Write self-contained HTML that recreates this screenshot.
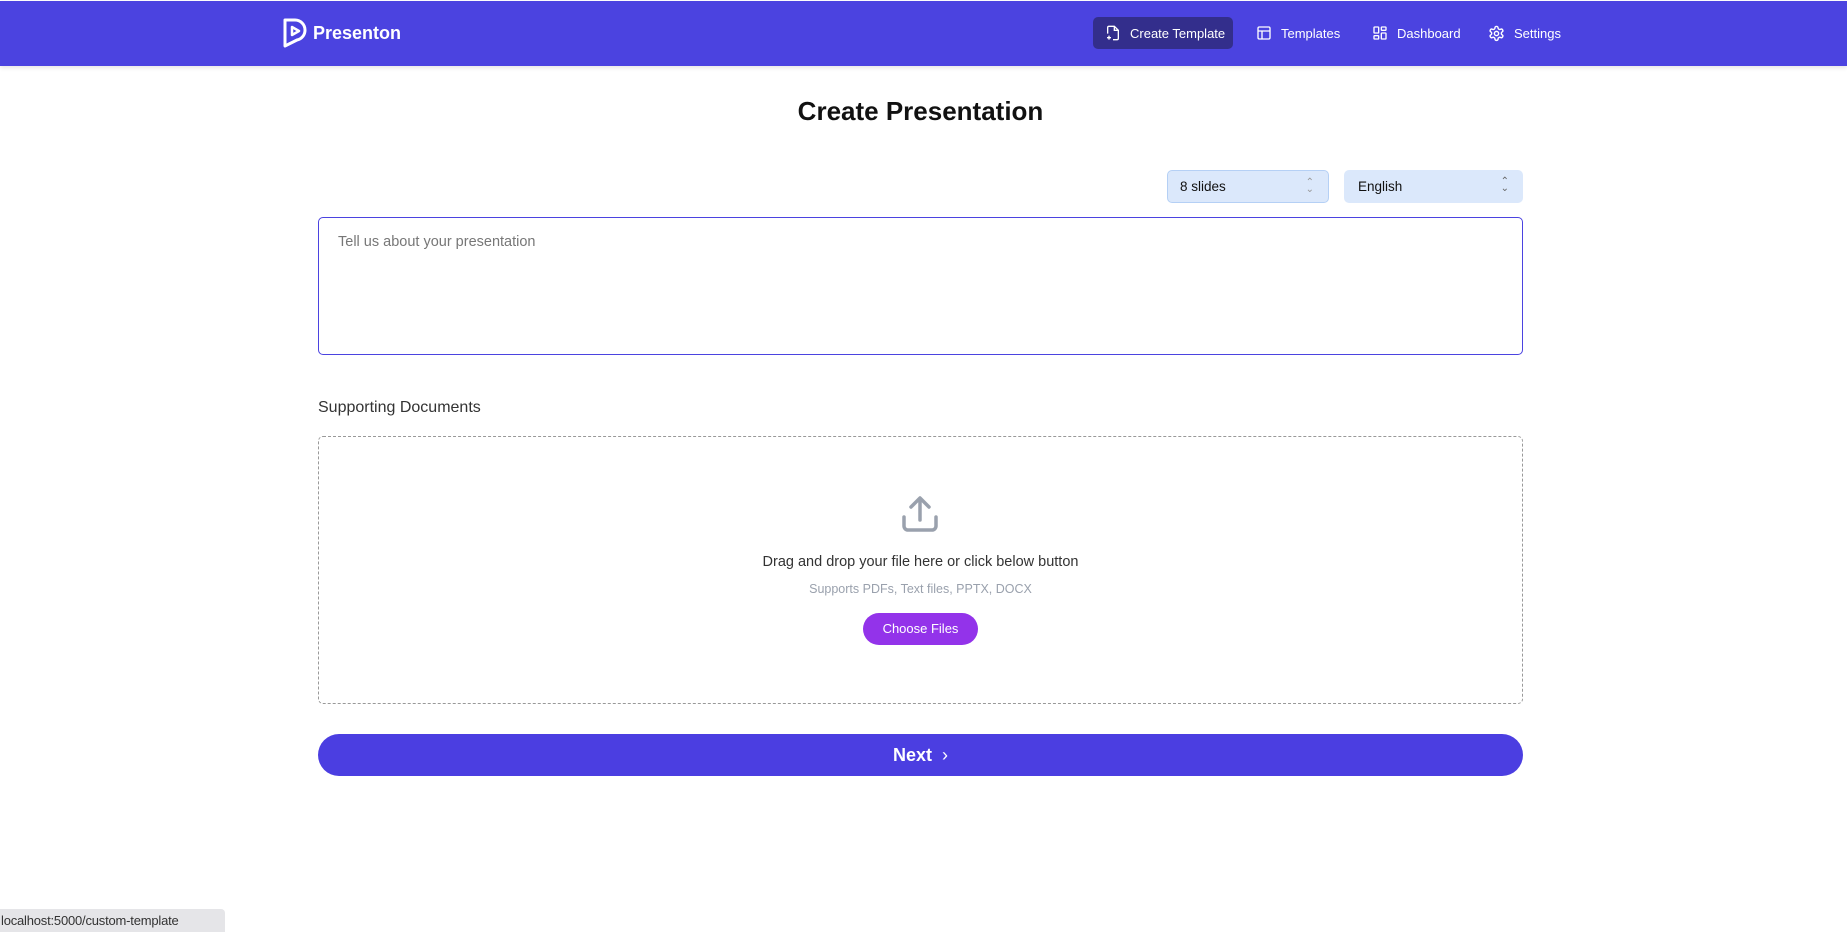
<!DOCTYPE html>
<html><head><meta charset="utf-8"><style>
*{box-sizing:border-box;margin:0;padding:0}
body{width:1847px;height:932px;background:#fff;font-family:"Liberation Sans",sans-serif;position:relative;overflow:hidden}
.hdr{position:absolute;left:0;top:1px;width:1847px;height:65px;background:#4b43e0;box-shadow:0 2px 4px rgba(0,0,0,.1)}
.abs{position:absolute}
.nav{position:absolute;top:17px;height:32px;display:flex;align-items:center;color:#fff;font-size:13px}
.nav svg{margin-right:9px}
.sel{position:absolute;top:170px;height:33px;background:#dbe8fb;border-radius:5px;font-size:13.5px;color:#111;display:flex;align-items:center;padding-left:12px}
</style></head><body>
<div class="hdr"></div>
<svg class="abs" style="left:283px;top:18px" width="26" height="30" viewBox="0 0 26 30"><path d="M2 2 H12 A10 10 0 0 1 22 12 A10 10 0 0 1 14 22 L2 28 Z" fill="none" stroke="#fff" stroke-width="3" stroke-linejoin="round"/><path d="M9 9 L16 13 L9 17 Z" fill="none" stroke="#fff" stroke-width="2.5" stroke-linejoin="round"/></svg>
<div class="abs" style="left:313px;top:23px;color:#fff;font-weight:bold;font-size:18px">Presenton</div>
<div class="abs" style="left:1093px;top:17px;width:140px;height:32px;background:#332e8c;border-radius:5px"></div>
<div class="nav" style="left:1105px"><svg width="16" height="16" viewBox="0 0 24 24" fill="none" stroke="#fff" stroke-width="2"><path d="M4 13V4a2 2 0 0 1 2-2h8l6 6v12a2 2 0 0 1-2 2h-6"/><path d="M14 2v6h6M3 19h6M6 16v6"/></svg>Create Template</div>
<div class="nav" style="left:1256px"><svg width="16" height="16" viewBox="0 0 24 24" fill="none" stroke="#fff" stroke-width="2"><rect x="3" y="3" width="18" height="18" rx="2"/><path d="M3 9h18M9 21V9"/></svg>Templates</div>
<div class="nav" style="left:1372px"><svg width="16" height="16" viewBox="0 0 24 24" fill="none" stroke="#fff" stroke-width="2"><rect x="3" y="3" width="7" height="9" rx="1"/><rect x="14" y="3" width="7" height="5" rx="1"/><rect x="14" y="12" width="7" height="9" rx="1"/><rect x="3" y="16" width="7" height="5" rx="1"/></svg>Dashboard</div>
<div class="nav" style="left:1488px"><svg width="17" height="17" viewBox="0 0 24 24" fill="none" stroke="#fff" stroke-width="2"><circle cx="12" cy="12" r="3"/><path d="M12.2 2h-.4a2 2 0 0 0-2 2v.2a2 2 0 0 1-1 1.7l-.4.2a2 2 0 0 1-2 0l-.2-.1a2 2 0 0 0-2.7.7l-.2.4a2 2 0 0 0 .7 2.7l.2.1a2 2 0 0 1 1 1.7v.5a2 2 0 0 1-1 1.700l-.2.1a2 2 0 0 0-.7 2.7l.2.4a2 2 0 0 0 2.7.7l.2-.1a2 2 0 0 1 2 0l.4.2a2 2 0 0 1 1 1.7v.2a2 2 0 0 0 2 2h.4a2 2 0 0 0 2-2v-.2a2 2 0 0 1 1-1.7l.4-.2a2 2 0 0 1 2 0l.2.1a2 2 0 0 0 2.7-.7l.2-.4a2 2 0 0 0-.7-2.7l-.2-.1a2 2 0 0 1-1-1.7v-.5a2 2 0 0 1 1-1.7l.2-.1a2 2 0 0 0 .7-2.7l-.2-.4a2 2 0 0 0-2.7-.7l-.2.1a2 2 0 0 1-2 0l-.4-.2a2 2 0 0 1-1-1.7V4a2 2 0 0 0-2-2z"/></svg>Settings</div>
<div class="abs" style="left:0;width:1841px;top:96px;text-align:center;font-size:26px;font-weight:bold;color:#111">Create Presentation</div>
<div class="sel" style="left:1167px;width:162px;border:1px solid #b5d0f5">8 slides<span class="abs" style="right:14px;top:8px;color:#999;font-size:10px;line-height:7px">&#8963;<br>&#8964;</span></div>
<div class="sel" style="left:1344px;width:179px;padding-left:14px">English<span class="abs" style="right:14px;top:8px;color:#666;font-size:10px;line-height:7px">&#8963;<br>&#8964;</span></div>
<div class="abs" style="left:318px;top:217px;width:1205px;height:138px;border:1px solid #4b43e0;border-radius:5px"></div>
<div class="abs" style="left:338px;top:234px;font-size:14.5px;color:#777">Tell us about your presentation</div>
<div class="abs" style="left:318px;top:399px;font-size:16px;color:#333">Supporting Documents</div>
<div class="abs" style="left:318px;top:436px;width:1205px;height:268px;border:1px dashed #999;border-radius:5px"></div>
<svg class="abs" style="left:900px;top:495px" width="40" height="40" viewBox="0 0 40 40" fill="none" stroke="#9aa1ad" stroke-width="3.5" stroke-linecap="round" stroke-linejoin="round"><path d="M20 25V4M11 12l9-9 9 9"/><path d="M4 22v9a4 4 0 0 0 4 4h24a4 4 0 0 0 4-4v-9"/></svg>
<div class="abs" style="left:0;width:1841px;top:554px;text-align:center;font-size:14.5px;color:#333">Drag and drop your file here or click below button</div>
<div class="abs" style="left:0;width:1841px;top:582px;text-align:center;font-size:12.5px;color:#9aa1ad">Supports PDFs, Text files, PPTX, DOCX</div>
<div class="abs" style="left:863px;top:613px;width:115px;height:32px;background:#9333ea;border-radius:16px;color:#fff;font-size:13px;text-align:center;line-height:32px">Choose Files</div>
<div class="abs" style="left:318px;top:734px;width:1205px;height:42px;background:#4b3ee1;border-radius:21px;color:#fff;font-size:18px;font-weight:bold;text-align:center;line-height:42px">Next &nbsp;<span style="font-weight:normal">&#8250;</span></div>
<div class="abs" style="left:0;top:909px;width:225px;height:23px;background:#e5e5e8;border-radius:0 4px 0 0;font-size:13px;color:#333;line-height:23px;padding-left:1px;letter-spacing:-0.2px">localhost:5000/custom-template</div>
</body></html>
